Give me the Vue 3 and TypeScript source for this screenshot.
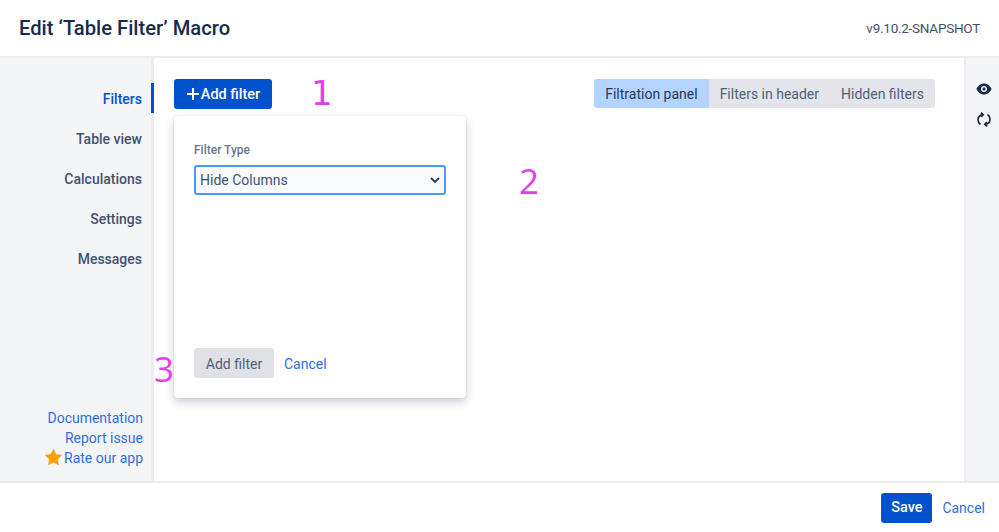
<script setup lang="ts">
const navItems: string[] = ['Filters', 'Table view', 'Calculations', 'Settings', 'Messages']
const tabs: string[] = ['Filtration panel', 'Filters in header', 'Hidden filters']
</script>

<template>
  <div class="dialog">
    <header class="head">
      <h1>Edit ‘Table Filter’ Macro</h1>
      <span class="version">v9.10.2-SNAPSHOT</span>
    </header>
    <main class="body">
      <aside class="side">
        <nav class="nav">
          <a v-for="(n, i) in navItems" :key="n" :class="['nav-item', { active: i === 0 }]">{{ n }}</a>
        </nav>
        <div class="links">
          <a>Documentation</a>
          <a>Report issue</a>
          <a class="rate">
            <svg class="star" width="17" height="16" viewBox="0 0 24 23"><path fill="#ff9f0a" stroke="#ff9f0a" stroke-linejoin="round" d="M12 .6l3.5 7.3 8 1.1-5.800 5.600 1.400 8-7.100-3.800-7.100 3.800 1.400-8L.1 9l8-1.100z"/></svg>
            Rate our app
          </a>
        </div>
      </aside>
      <section class="content">
        <div class="toolbar">
          <button class="primary add">
            <svg width="14" height="14" viewBox="0 0 14 14"><path d="M7 1v12M1 7h12" stroke="#fff" stroke-width="2"/></svg>
            Add filter
          </button>
          <div class="tabs">
            <span v-for="(t, i) in tabs" :key="t" :class="['tab', { on: i === 0 }]">{{ t }}</span>
          </div>
        </div>
        <div class="popup">
          <label class="lbl">Filter Type</label>
          <div class="select">
            <span>Hide Columns</span>
            <svg width="10" height="7" viewBox="0 0 10 7"><path d="M1 1l4 4 4-4" fill="none" stroke="#253858" stroke-width="1.8"/></svg>
          </div>
          <div class="actions">
            <button class="grey">Add filter</button>
            <a class="link">Cancel</a>
          </div>
        </div>
        <span class="mark m1">1</span>
        <span class="mark m2">2</span>
        <span class="mark m3">3</span>
      </section>
      <aside class="rail">
        <svg width="16" height="12" viewBox="0 0 16 12"><path fill="#172b4d" fill-rule="evenodd" d="M8 .5c3.6 0 6.400 2.600 7.600 5.500C14.400 8.900 11.600 11.500 8 11.500S1.600 8.900.4 6C1.600 3.100 4.400.5 8 .5zM8 3a3 3 0 1 0 0 6 3 3 0 0 0 0-6zm0 1.500a1.500 1.500 0 1 1 0 3 1.500 1.500 0 0 1 0-3z"/></svg>
        <svg width="14" height="15" viewBox="0 0 14 15" fill="none" stroke="#172b4d" stroke-width="1.700">
          <path d="M3.500 12.500C1.800 11.300 1 9.500 1 7.800 1 5 3 3 5.800 2.600"/>
          <path d="M3.800 .6l2.400 2-2 2.300" />
          <path d="M10.500 2.500C12.200 3.700 13 5.500 13 7.200c0 2.800-2 4.800-4.800 5.200"/>
          <path d="M10.200 14.400l-2.400-2 2-2.300"/>
        </svg>
      </aside>
    </main>
    <footer class="foot">
      <button class="primary save">Save</button>
      <a class="link">Cancel</a>
    </footer>
  </div>
</template>

<style scoped>
.dialog {
  width: 999px;
  height: 532px;
  display: flex;
  flex-direction: column;
  overflow: hidden;
  background: #fff;
  font-family: Roboto, "Open Sans", sans-serif;
  font-size: 14px;
  color: #42526e;
}
.head {
  height: 56px;
  flex: none;
  display: flex;
  align-items: center;
  justify-content: space-between;
  padding: 0 19px;
  border-bottom: 2px solid #ebecf0;
}
h1 {
  margin: 0;
  font-size: 20.2px;
  font-weight: 500;
  color: #172b4d;
}
.version { font-size: 13.5px; letter-spacing: -0.25px; color: #42526e; }
.body { flex: 1; min-height: 0; display: flex; }
.side {
  width: 151px;
  flex: none;
  background: #f4f5f7;
  display: flex;
  flex-direction: column;
  justify-content: space-between;
  padding: 0 0 13px;
  border-right: 3px solid #ebecf0;
}
.nav { padding-top: 25px; display: flex; flex-direction: column; gap: 10px; }
.nav-item {
  height: 30px;
  line-height: 32px;
  text-align: right;
  padding-right: 9px;
  margin-right: -3px;
  font-weight: 500;
  color: #42526e;
  border-right: 3px solid transparent;
}
.nav-item.active { color: #0052cc; border-right-color: #0052cc; }
.links {
  display: flex;
  flex-direction: column;
  align-items: flex-end;
  padding-right: 8px;
  line-height: 20px;
  color: #2f6fdb;
}
.rate { display: flex; align-items: center; gap: 2px; }
.star { margin-top: -3px; }
.content { flex: 1; position: relative; padding: 21px 29px 0 20px; min-width: 0; }
.toolbar { display: flex; justify-content: space-between; align-items: flex-start; }
button {
  border: 0;
  border-radius: 3px;
  font: inherit;
  height: 30px;
}
.primary { background: #0052cc; color: #fff; font-weight: 500; }
.add {
  width: 98px;
  display: flex;
  align-items: center;
  justify-content: center;
  gap: 1px;
  padding: 0;
  font-size: 14.5px;
}
.tabs { display: flex; height: 29px; border-radius: 3px; overflow: hidden; background: #e3e5ea; }
.tab { padding: 0 11px; line-height: 31px; color: #505f79; }
.tab.on { background: #b3d4ff; color: #253858; }
.popup {
  width: 292px;
  height: 282px;
  box-sizing: border-box;
  margin-top: 7px;
  padding: 26px 20px 0;
  background: #fff;
  border-radius: 3px;
  box-shadow: 0 4px 10px rgba(9, 30, 66, 0.22), 0 0 1px rgba(9, 30, 66, 0.25);
  display: flex;
  flex-direction: column;
}
.lbl { font-size: 12px; font-weight: 500; color: #6b778c; line-height: 16px; }
.select {
  margin-top: 7px;
  width: 252px;
  height: 30px;
  box-sizing: border-box;
  border: 2px solid #4c9aff;
  border-radius: 3px;
  background: #fafbfc;
  display: flex;
  align-items: center;
  justify-content: space-between;
  padding: 0 4px;
  color: #42526e;
}
.actions { margin-top: auto; margin-bottom: 20px; display: flex; align-items: center; gap: 10px; }
.grey { width: 80px; background: #dfe1e6; color: #505f79; padding: 2px 0 0; }
.link { color: #2f6fdb; padding-top: 1px; }
.mark {
  position: absolute;
  font-size: 35px;
  line-height: 40px;
  color: #e83cf0;
  font-family: "Open Sans", sans-serif;
}
.m1 { left: 157px; top: 15px; font-family: "DejaVu Sans", sans-serif; font-size: 34px; }
.m2 { left: 365px; top: 103px; }
.m3 { left: 0; top: 291px; }
.rail {
  flex: none;
  background: #f4f5f7;
  border-left: 2px solid #ebecf0;
  display: flex;
  flex-direction: column;
  align-items: center;
  padding: 25px 0 0 3px;
  box-sizing: border-box;
  width: 35px;
  gap: 17px;
}
.foot {
  height: 49px;
  flex: none;
  border-top: 2px solid #ebecf0;
  display: flex;
  align-items: center;
  justify-content: flex-end;
  gap: 10px;
  padding: 0 14px 0 0;
}
.save { width: 51px; font-size: 14.5px; }
</style>
